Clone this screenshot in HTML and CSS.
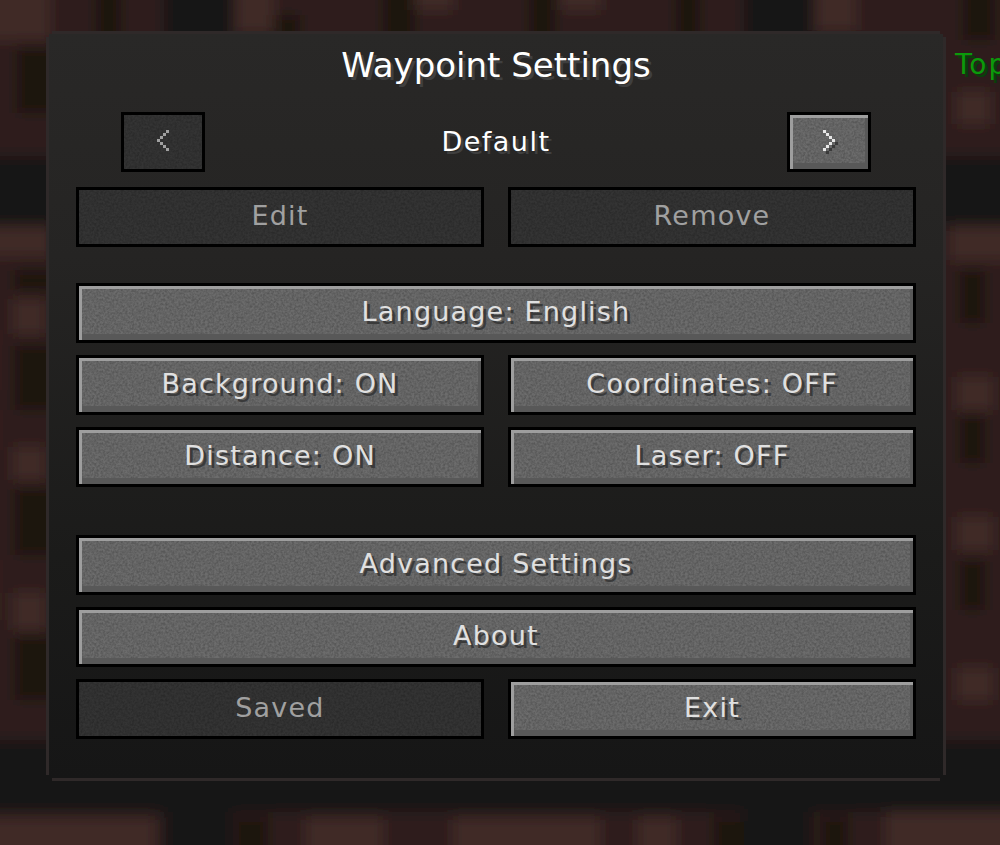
FILE: index.html
```html
<!DOCTYPE html>
<html lang="en">
<head>
    <meta charset="UTF-8">
    <meta name="viewport" content="width=device-width, initial-scale=1.0">
    <title>Waypoint Settings</title>
    <link rel="stylesheet" href="styles.css">
</head>
<body>
    <!-- blurred world behind the menu -->
    <svg class="backdrop" width="1000" height="845" viewBox="0 0 1000 845">
        <defs>
            <filter id="blur" x="-5%" y="-5%" width="110%" height="110%">
                <feGaussianBlur stdDeviation="7"></feGaussianBlur>
            </filter>
        </defs>
        <g filter="url(#blur)">
            <rect x="-20" y="-20" width="1040" height="885" fill="#2d1c1a"></rect>
            <!-- light blocks -->
            <g fill="#3f2a28">
                <rect x="-20" y="-20" width="70" height="60"></rect>
                <rect x="236" y="-20" width="38" height="52"></rect>
                <rect x="415" y="-20" width="38" height="30"></rect>
                <rect x="561" y="-20" width="40" height="30"></rect>
                <rect x="816" y="-20" width="40" height="50"></rect>
                <rect x="957" y="92" width="33" height="32"></rect>
                <rect x="-20" y="226" width="70" height="30"></rect>
                <rect x="-20" y="330" width="14" height="60"></rect>
                <rect x="13" y="299" width="32" height="35"></rect>
                <rect x="-20" y="410" width="14" height="40"></rect>
                <rect x="13" y="447" width="32" height="33"></rect>
                <rect x="-20" y="560" width="14" height="60"></rect>
                <rect x="13" y="593" width="32" height="37"></rect>
                <rect x="957" y="377" width="36" height="33"></rect>
                <rect x="957" y="517" width="36" height="33"></rect>
                <rect x="957" y="668" width="36" height="32"></rect>
                <rect x="950" y="226" width="60" height="34"></rect>
                <rect x="-20" y="818" width="175" height="50"></rect>
                <rect x="306" y="818" width="77" height="50"></rect>
                <rect x="453" y="818" width="147" height="50"></rect>
                <rect x="638" y="818" width="38" height="50"></rect>
                <rect x="886" y="812" width="130" height="50"></rect>
            </g>
            <!-- dark blocks -->
            <g fill="#1e1410">
                <rect x="96" y="-20" width="25" height="60"></rect>
                <rect x="274" y="15" width="26" height="25"></rect>
                <rect x="383" y="-20" width="32" height="60"></rect>
                <rect x="529" y="-20" width="26" height="60"></rect>
                <rect x="676" y="-20" width="24" height="60"></rect>
                <rect x="963" y="-20" width="32" height="60"></rect>
                <rect x="17" y="48" width="40" height="65"></rect>
                <rect x="15" y="270" width="40" height="21"></rect>
                <rect x="15" y="345" width="40" height="65"></rect>
                <rect x="15" y="488" width="40" height="67"></rect>
                <rect x="15" y="636" width="40" height="64"></rect>
                <rect x="960" y="270" width="25" height="53"></rect>
                <rect x="960" y="415" width="25" height="48"></rect>
                <rect x="960" y="560" width="25" height="50"></rect>
                <rect x="236" y="818" width="32" height="50"></rect>
                <rect x="714" y="818" width="32" height="50"></rect>
                <rect x="822" y="818" width="26" height="50"></rect>
            </g>
            <!-- the dark bands -->
            <g fill="#131315">
                <rect x="-20" y="156" width="1040" height="70"></rect>
                <rect x="-20" y="740" width="1040" height="72"></rect>
                <rect x="164" y="-20" width="68" height="890"></rect>
                <rect x="744" y="-20" width="68" height="890"></rect>
            </g>
        </g>
    </svg>

    <div class="top-label">Top</div>

    <main class="panel">
        <h1 class="panel-title">Waypoint Settings</h1>

        <div class="preset-row">
            <button class="btn btn-arrow" disabled>
                <svg class="arrow" width="12" height="21" viewBox="0 0 4 7" shape-rendering="crispEdges">
                    <path d="M3 0h1v1H3zM2 1h1v1H2zM1 2h1v1H1zM0 3h1v1H0zM1 4h1v1H1zM2 5h1v1H2zM3 6h1v1H3z"></path>
                </svg>
            </button>
            <span class="preset-name">Default</span>
            <button class="btn btn-arrow">
                <svg class="arrow arrow-next" width="15" height="24" viewBox="0 0 5 8" shape-rendering="crispEdges">
                    <path class="arrow-shadow" d="M1 1h1v1H1zM2 2h1v1H2zM3 3h1v1H3zM4 4h1v1H4zM3 5h1v1H3zM2 6h1v1H2zM1 7h1v1H1z"></path>
                    <path d="M0 0h1v1H0zM1 1h1v1H1zM2 2h1v1H2zM3 3h1v1H3zM2 4h1v1H2zM1 5h1v1H1zM0 6h1v1H0z"></path>
                </svg>
            </button>
        </div>

        <div class="btn-grid">
            <button class="btn" disabled>Edit</button>
            <button class="btn" disabled>Remove</button>
        </div>

        <div class="btn-grid section">
            <button class="btn wide">Language: English</button>
            <button class="btn">Background: ON</button>
            <button class="btn">Coordinates: OFF</button>
            <button class="btn">Distance: ON</button>
            <button class="btn">Laser: OFF</button>
        </div>

        <div class="btn-grid section-far">
            <button class="btn wide">Advanced Settings</button>
            <button class="btn wide">About</button>
            <button class="btn" disabled>Saved</button>
            <button class="btn">Exit</button>
        </div>
    </main>
</body>
</html>
```

FILE: styles.css
```css
html {
    background: #2c1c1a;
}
body {
    margin: 0;
    width: 1000px;
    height: 845px;
    padding: 31px 0 0 46px;
    box-sizing: border-box;
    overflow: hidden;
    font-family: "DejaVu Sans", sans-serif;
}
.backdrop {
    position: absolute;
    left: 0;
    top: 0;
    z-index: -1;
}
.top-label {
    position: absolute;
    left: 955px;
    top: 47px;
    font-size: 28px;
    line-height: 36px;
    letter-spacing: 2px;
    color: #0b9a0b;
    text-shadow: 3px 3px 0 #0a3f0a;
}
.panel {
    width: 900px;
    height: 750px;
    box-sizing: border-box;
    padding: 0 27px;
    border: 3px solid #2f2929;
    background: linear-gradient(#292827, #252423 30%, #1b1b1a 70%, #161616);
    clip-path: polygon(6px 0, 894px 0, 894px 3px, 897px 3px, 897px 6px, 900px 6px, 900px 744px, 897px 744px, 897px 747px, 894px 747px, 894px 750px, 6px 750px, 6px 747px, 3px 747px, 3px 744px, 0 744px, 0 6px, 3px 6px, 3px 3px, 6px 3px);
}
.panel-title {
    margin: 0 0 16px;
    height: 62px;
    line-height: 62px;
    text-align: center;
    font-size: 34px;
    font-weight: normal;
    color: #fff;
    text-shadow: 3px 3px 0 #3f3f3f;
}
.preset-row {
    display: flex;
    align-items: center;
    justify-content: space-between;
    padding: 0 45px;
    margin-bottom: 15px;
}
.preset-name {
    padding-bottom: 2px;
    font-size: 27px;
    letter-spacing: 1.5px;
    color: #fff;
    text-shadow: 3px 3px 0 #3f3f3f;
}
.btn-grid {
    display: grid;
    grid-template-columns: 408px 408px;
    gap: 12px 24px;
}
.section {
    margin-top: 36px;
}
.section-far {
    margin-top: 48px;
}
.wide {
    grid-column: 1 / 3;
}
.btn {
    height: 60px;
    padding: 0 0 3px;
    border: 3px solid #000;
    font-family: inherit;
    font-size: 27px;
    letter-spacing: 1.2px;
    color: #e0e0e0;
    text-shadow: 3px 3px 0 #3a3a3a;
    background-color: #6c6c6c;
    background-image: url("data:image/svg+xml,%3Csvg xmlns='http://www.w3.org/2000/svg' width='240' height='60'%3E%3Cfilter id='n'%3E%3CfeTurbulence type='fractalNoise' baseFrequency='.45' numOctaves='2'/%3E%3CfeColorMatrix values='0 0 0 0 0 0 0 0 0 0 0 0 0 0 0 .4 0 0 0 -.12'/%3E%3C/filter%3E%3Crect width='240' height='60' filter='url(%23n)'/%3E%3C/svg%3E");
    box-shadow: inset 3px 3px 0 #9e9e9e, inset -3px -6px 0 #585858;
}
.btn:disabled {
    color: #a0a0a0;
    text-shadow: none;
    background-color: #343434;
    box-shadow: none;
}
.btn-arrow {
    width: 84px;
    display: flex;
    align-items: center;
    justify-content: center;
}
.arrow {
    fill: #e6e6e6;
}
.arrow-next {
    margin: 3px 0 0 3px;
}
.btn:disabled .arrow {
    fill: #a0a0a0;
}
.arrow-shadow {
    fill: #3a3a3a;
}
```
